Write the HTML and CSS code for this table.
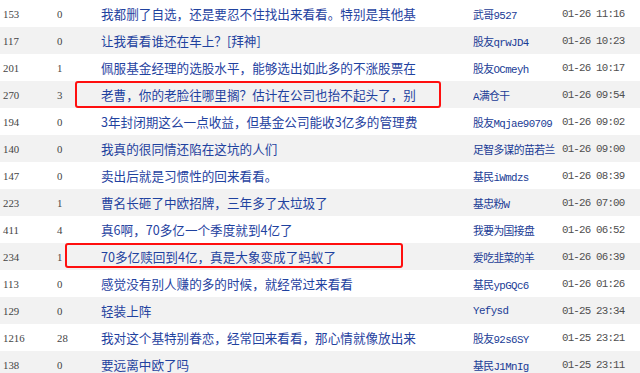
FILE: index.html
```html
<!DOCTYPE html>
<html lang="zh-CN">
<head>
<meta charset="utf-8">
<link rel="stylesheet" href="styles.css">
</head>
<body>
<div class="list">
  <div class="row"><span class="num">153</span><span class="num">0</span><span class="title">我都删了自选，还是要忍不住找出来看看。特别是其他基</span><span class="author">武哥9527</span><span class="time">01-26 11:16</span></div>
  <div class="row"><span class="num">117</span><span class="num">0</span><span class="title">让我看看谁还在车上？[拜神]</span><span class="author">股友qrwJD4</span><span class="time">01-26 10:23</span></div>
  <div class="row"><span class="num">201</span><span class="num">1</span><span class="title">佩服基金经理的选股水平，能够选出如此多的不涨股票在</span><span class="author">股友OCmeyh</span><span class="time">01-26 10:17</span></div>
  <div class="row"><span class="num">270</span><span class="num">3</span><span class="title">老曹，你的老脸往哪里搁？估计在公司也抬不起头了，别</span><span class="author">A满仓干</span><span class="time">01-26 09:54</span><span class="mark mark-a"></span></div>
  <div class="row"><span class="num">194</span><span class="num">0</span><span class="title">3年封闭期这么一点收益，但基金公司能收3亿多的管理费</span><span class="author">股友Mqjae90709</span><span class="time">01-26 09:02</span></div>
  <div class="row"><span class="num">140</span><span class="num">0</span><span class="title">我真的很同情还陷在这坑的人们</span><span class="author">足智多谋的苗若兰</span><span class="time">01-26 09:00</span></div>
  <div class="row"><span class="num">147</span><span class="num">0</span><span class="title">卖出后就是习惯性的回来看看。</span><span class="author">基民iWmdzs</span><span class="time">01-26 08:39</span></div>
  <div class="row"><span class="num">223</span><span class="num">1</span><span class="title">曹名长砸了中欧招牌，三年多了太垃圾了</span><span class="author">基忠粉W</span><span class="time">01-26 07:00</span></div>
  <div class="row"><span class="num">411</span><span class="num">4</span><span class="title">真6啊，70多亿一个季度就到4亿了</span><span class="author">我要为国接盘</span><span class="time">01-26 06:52</span></div>
  <div class="row"><span class="num">234</span><span class="num">1</span><span class="title">70多亿赎回到4亿，真是大象变成了蚂蚁了</span><span class="author">爱吃韭菜的羊</span><span class="time">01-26 06:39</span><span class="mark mark-b"></span></div>
  <div class="row"><span class="num">113</span><span class="num">0</span><span class="title">感觉没有别人赚的多的时候，就经常过来看看</span><span class="author">基民ypGQc6</span><span class="time">01-26 01:26</span></div>
  <div class="row"><span class="num">129</span><span class="num">0</span><span class="title">轻装上阵</span><span class="author">Yefysd</span><span class="time">01-25 23:34</span></div>
  <div class="row"><span class="num">1216</span><span class="num">28</span><span class="title">我对这个基特别眷恋，经常回来看看，那心情就像放出来</span><span class="author">股友92s6SY</span><span class="time">01-25 23:21</span></div>
  <div class="row"><span class="num">138</span><span class="num">0</span><span class="title">要远离中欧了吗</span><span class="author">基民J1MnIg</span><span class="time">01-25 23:11</span></div>
</div>
</body>
</html>
```
FILE: styles.css
```css
html, body {
  margin: 0;
  padding: 0;
  background: #ffffff;
}
.list {
  display: flex;
  flex-direction: column;
  width: 640px;
}
.row {
  position: relative;
  display: grid;
  grid-template-columns: 54px 44px 372px 89px 1fr;
  align-items: center;
  height: 27px;
  padding-left: 3px;
  background: #ffffff;
  white-space: nowrap;
}
.row:nth-child(even) {
  background: #f2f2f2;
}
.num {
  font-family: "Liberation Serif", "Noto Sans CJK SC", serif;
  font-size: 10.8px;
  color: #444444;
}
.title {
  font-family: "Noto Sans CJK SC", "Microsoft YaHei", sans-serif;
  font-size: 12.6px;
  color: #1f429f;
  overflow: hidden;
}
.author {
  font-family: "Liberation Mono", "Noto Sans CJK SC", monospace;
  font-size: 10.8px;
  letter-spacing: -0.6px;
  color: #1a3c96;
  overflow: hidden;
}
.time {
  font-family: "Liberation Mono", monospace;
  font-size: 10.8px;
  letter-spacing: -0.8px;
  color: #505050;
}
.mark {
  position: absolute;
  top: 0;
  border: 2px solid #ff0f0f;
  border-radius: 3px;
  box-sizing: border-box;
  pointer-events: none;
}
.mark-a {
  left: 75px;
  width: 366px;
  height: 27px;
}
.mark-b {
  left: 65px;
  width: 338px;
  height: 25px;
}
```
